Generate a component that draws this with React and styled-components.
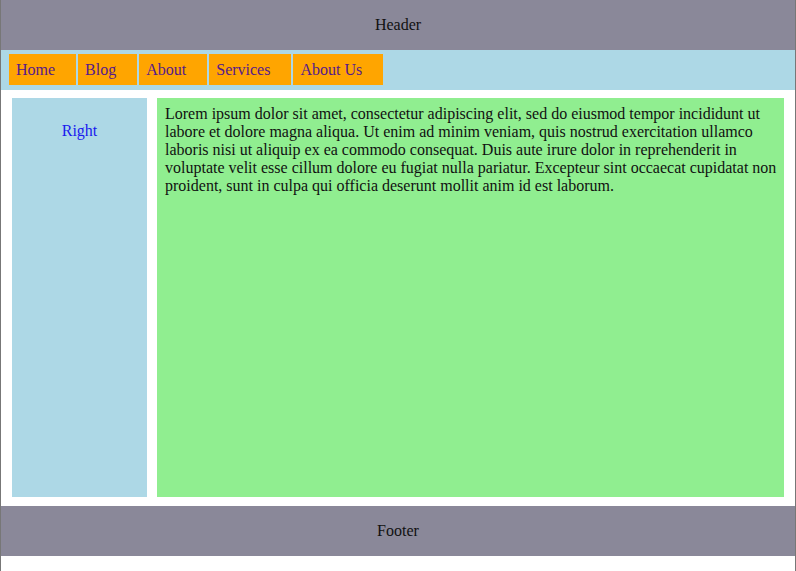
import styled, { createGlobalStyle } from "styled-components"

const GlobalStyle = createGlobalStyle`
  html, body {
    margin: 0;
    padding: 0;
    background: #fff;
  }
  body {
    font-family: "Liberation Serif", "Times New Roman", serif;
    font-size: 16px;
  }
`

const navItems = ["Home", "Blog", "About", "Services", "About Us"]

const lorem =
  "Lorem ipsum dolor sit amet, consectetur adipiscing elit, sed do eiusmod tempor incididunt ut labore et dolore magna aliqua. Ut enim ad minim veniam, quis nostrud exercitation ullamco laboris nisi ut aliquip ex ea commodo consequat. Duis aute irure dolor in reprehenderit in voluptate velit esse cillum dolore eu fugiat nulla pariatur. Excepteur sint occaecat cupidatat non proident, sunt in culpa qui officia deserunt mollit anim id est laborum."

export default function App() {
  return (
    <>
      <GlobalStyle />
      <Page>
        <Bar>Header</Bar>
        <Nav>
          {navItems.map((item) => (
            <NavLink key={item} href="#">
              {item}
            </NavLink>
          ))}
        </Nav>
        <Main>
          <Sidebar>
            <SideLink href="#">Right</SideLink>
          </Sidebar>
          <Content>{lorem}</Content>
        </Main>
        <Bar>Footer</Bar>
      </Page>
    </>
  )
}

const Page = styled.div`
  min-height: 100vh;
  box-sizing: border-box;
  border-left: 1px solid #777;
  border-right: 1px solid #777;
  background: #fff;
`

const Bar = styled.div`
  height: 50px;
  line-height: 50px;
  text-align: center;
  background: #8a8899;
  color: #111;
`

const Nav = styled.nav`
  display: flex;
  gap: 2px;
  height: 40px;
  box-sizing: border-box;
  padding: 4px 8px 5px;
  background: #add8e6;
`

const NavLink = styled.a`
  display: block;
  padding: 7px 21px 7px 7px;
  line-height: 18px;
  background: orange;
  color: #551a8b;
  text-decoration: none;
`

const Main = styled.main`
  display: flex;
  gap: 10px;
  height: 416px;
  box-sizing: border-box;
  padding: 8px 11px 9px;
`

const Sidebar = styled.aside`
  width: 135px;
  flex-shrink: 0;
  box-sizing: border-box;
  padding-top: 24px;
  text-align: center;
  background: #add8e6;
`

const SideLink = styled.a`
  color: #1a1aee;
  text-decoration: none;
  line-height: 18px;
`

const Content = styled.section`
  flex: 1;
  box-sizing: border-box;
  padding: 7px 7px 7px 8px;
  line-height: 18px;
  background: #90ee90;
  color: #111;
`
